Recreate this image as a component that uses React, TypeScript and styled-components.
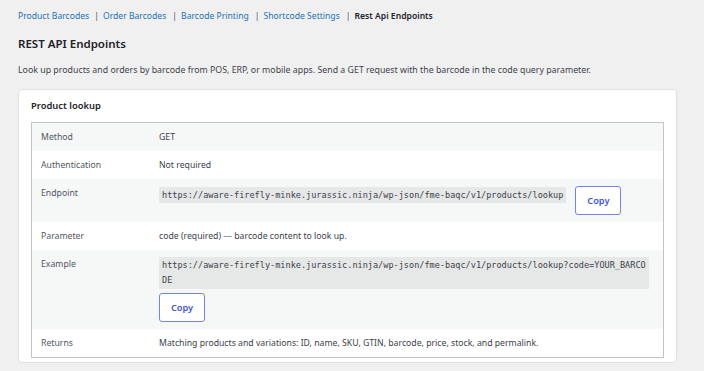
import styled, { createGlobalStyle } from 'styled-components'

const GlobalStyle = createGlobalStyle`
    body {
        margin: 0;
        background: #f0f0f1;
        font-family: "Noto Sans", "Open Sans", sans-serif;
        color: #3c434a;
    }
`

const tabs = ['Product Barcodes', 'Order Barcodes', 'Barcode Printing', 'Shortcode Settings', 'Rest Api Endpoints'];

const endpoint = 'https://aware-firefly-minke.jurassic.ninja/wp-json/fme-baqc/v1/products/lookup';

function App() {
    return (
        <Page>
            <GlobalStyle />
            <Tabs>
                {
                    tabs.map((tab, i) => (
                        <Tab key={tab}>
                            {i > 0 && <Sep $wide={i > 1}>|</Sep>}
                            <TabLink $current={i === tabs.length - 1}>{tab}</TabLink>
                        </Tab>
                    ))
                }
            </Tabs>
            <Heading>REST API Endpoints</Heading>
            <Description>
                Look up products and orders by barcode from POS, ERP, or mobile apps. Send a GET request with the barcode in the code query parameter.
            </Description>
            <Card>
                <CardTitle>Product lookup</CardTitle>
                <Table>
                    <Row $alt>
                        <Label>Method</Label>
                        <Value>GET</Value>
                    </Row>
                    <Row>
                        <Label>Authentication</Label>
                        <Value>Not required</Value>
                    </Row>
                    <Row $alt>
                        <Label>Endpoint</Label>
                        <Value>
                            <Inline>
                                <Code>{endpoint}</Code>
                                <CopyButton>Copy</CopyButton>
                            </Inline>
                        </Value>
                    </Row>
                    <Row>
                        <Label>Parameter</Label>
                        <Value>code (required) — barcode content to look up.</Value>
                    </Row>
                    <Row $alt>
                        <Label>Example</Label>
                        <Value>
                            <Stack>
                                <Code $block>{endpoint + '?code=YOUR_BARCODE'}</Code>
                                <CopyButton>Copy</CopyButton>
                            </Stack>
                        </Value>
                    </Row>
                    <Row>
                        <Label>Returns</Label>
                        <Value>Matching products and variations: ID, name, SKU, GTIN, barcode, price, stock, and permalink.</Value>
                    </Row>
                </Table>
            </Card>
        </Page>
    );
}

const Page = styled.div`
    padding: 9px 27px 0 18px;
`

const Tabs = styled.ul`
    display: flex;
    list-style: none;
    margin: 0;
    padding: 0;
    font-size: 8.6px;
    line-height: 14px;
`

const Tab = styled.li`
    display: flex;
`

interface ISepProps {
    $wide?: boolean;
}

const Sep = styled.span<ISepProps>`
    color: #50575e;
    margin: ${props => props.$wide ? '0 4px 0 6px' : '0 4px 0 5px'};
`

interface ITabLinkProps {
    $current?: boolean;
}

const TabLink = styled.a<ITabLinkProps>`
    color: ${props => props.$current ? '#1d2327' : '#2271b1'};
    font-weight: ${props => props.$current ? 600 : 400};
    text-decoration: none;
    cursor: pointer;
`

const Heading = styled.h1`
    margin: 12px 0 0;
    font-size: 11.5px;
    line-height: 18px;
    font-weight: 600;
    color: #1d2327;
`

const Description = styled.p`
    margin: 10px 0 0;
    font-size: 8.8px;
    line-height: 14px;
    color: #3c434a;
`

const Card = styled.div`
    margin-top: 12px;
    background: #fff;
    border: 1px solid #e0e0e0;
    border-radius: 4px;
    padding: 7px 12px 4px;
`

const CardTitle = styled.h2`
    margin: 0 0 7px;
    font-size: 9.4px;
    line-height: 18px;
    font-weight: 600;
    color: #1d2327;
`

const Table = styled.div`
    border: 1px solid #c3c4c7;
`

interface IRowProps {
    $alt?: boolean;
}

const Row = styled.div<IRowProps>`
    display: grid;
    grid-template-columns: 118px 1fr;
    background: ${props => props.$alt ? '#f6f7f7' : '#fff'};
`

const Label = styled.div`
    padding: 7px 9px;
    font-size: 8.7px;
    line-height: 14px;
    color: #50575e;
`

const Value = styled.div`
    padding: 7px 14px 7px 9px;
    font-size: 8.7px;
    line-height: 14px;
    color: #3c434a;
    min-width: 0;
`

const Inline = styled.div`
    display: flex;
    align-items: flex-start;
    gap: 9px;
`

const Stack = styled.div`
    display: flex;
    flex-direction: column;
    align-items: flex-start;
    gap: 4px;
`

interface ICodeProps {
    $block?: boolean;
}

const Code = styled.code<ICodeProps>`
    display: block;
    margin-top: ${props => props.$block ? '0' : '1px'};
    padding: 1px 3px;
    background: #e6e7e7;
    font-family: "DejaVu Sans Mono", "Liberation Mono", monospace;
    font-size: 8.55px;
    line-height: ${props => props.$block ? '15px' : '14px'};
    color: #3c434a;
    word-break: break-all;
    align-self: ${props => props.$block ? 'stretch' : 'auto'};
`

const CopyButton = styled.button`
    width: 46px;
    height: 29px;
    flex-shrink: 0;
    background: #fff;
    border: 1px solid #7384ec;
    border-radius: 3px;
    color: #3f57e0;
    font-family: inherit;
    font-size: 9.2px;
    font-weight: 600;
    cursor: pointer;
`

export default App;
